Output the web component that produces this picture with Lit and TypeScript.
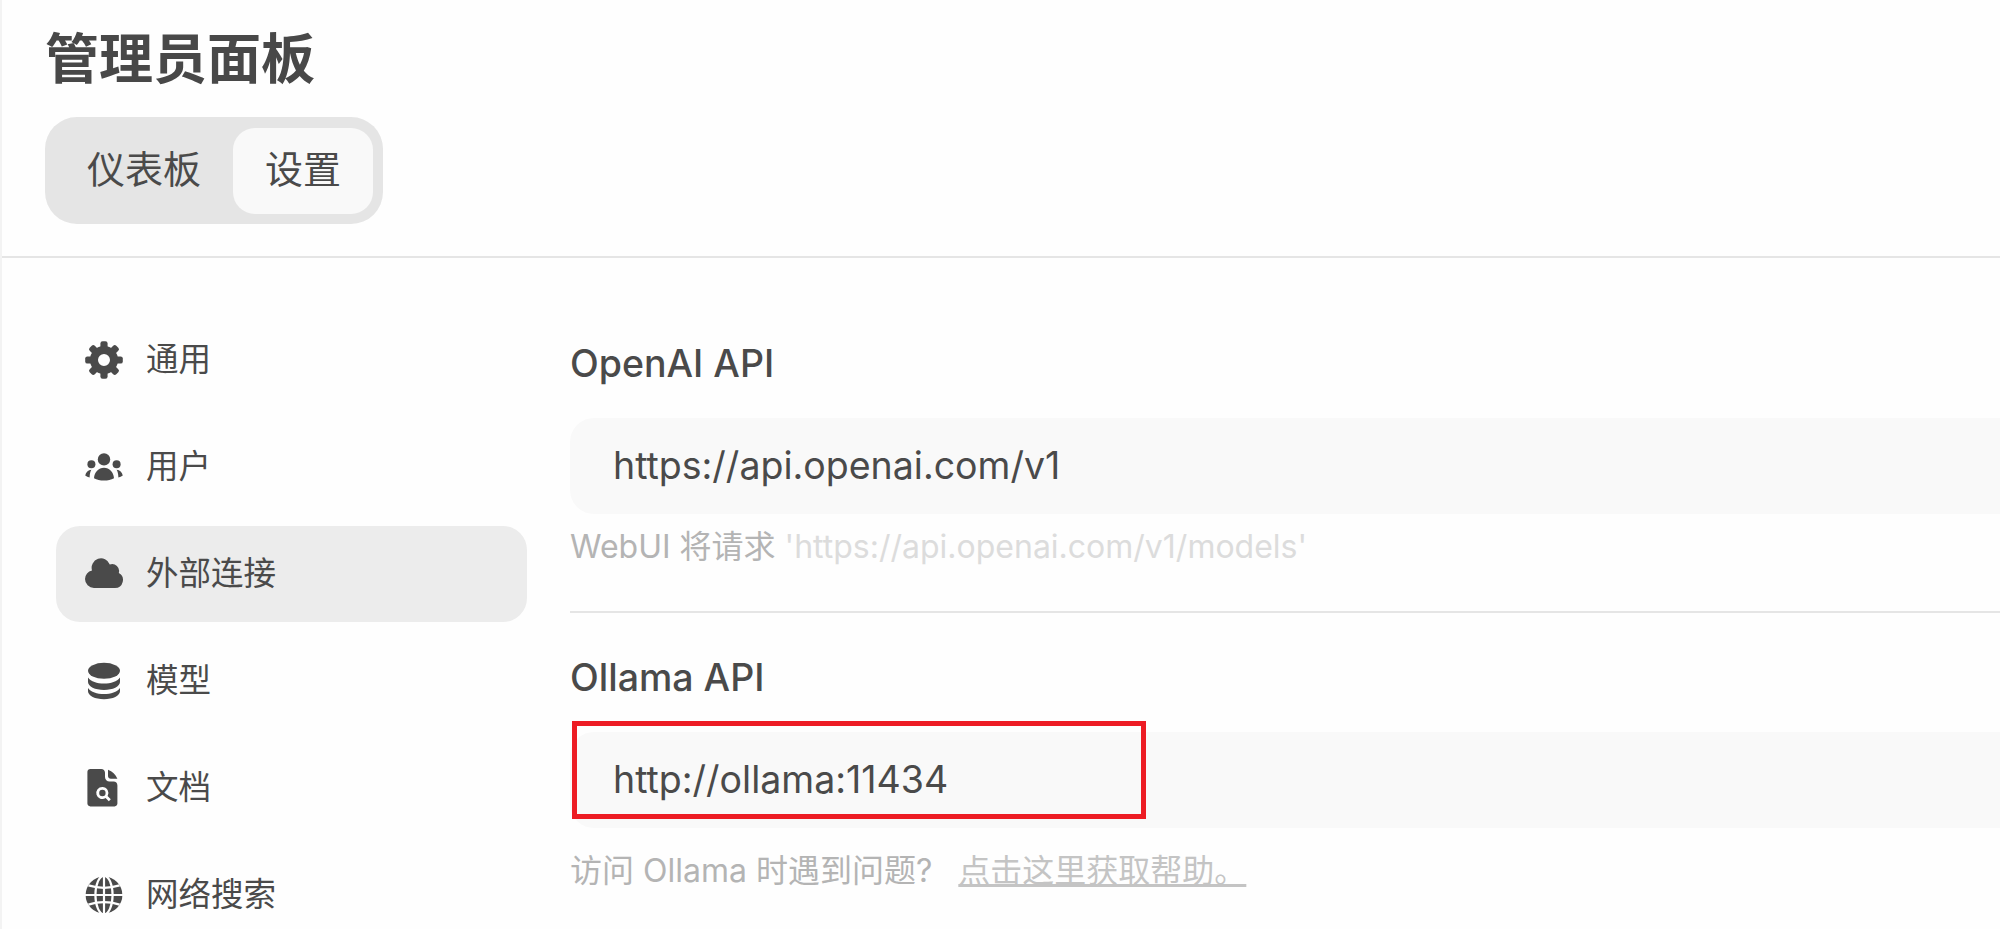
import { LitElement, html, css, svg } from 'lit';
import { customElement } from 'lit/decorators.js';

const gearTeeth = [0, 45, 90, 135, 180, 225, 270, 315].map(
  (a) => svg`<rect x="8.2" y="0.6" width="3.6" height="5" rx="1.1" transform="rotate(${a} 10 10)" />`
);

const icons = {
  gear: svg`${gearTeeth}<circle cx="10" cy="10" r="5" fill="none" stroke="currentColor" stroke-width="4" />`,
  users: svg`<circle cx="10" cy="6.2" r="3.1" /><circle cx="3.7" cy="8.6" r="2" /><circle cx="16.3" cy="8.6" r="2" />
    <path d="M5 15.6C5.2 12.6 7.3 10.4 10 10.4s4.800 2.200 5 5.200c-1.400.8-3.100 1.200-5 1.200s-3.600-.4-5-1.200Z" />
    <path d="M.6 14.300C1 12.500 2 11.500 3.700 11.400c-.5.800-.8 2-.9 3.800-.800-.1-1.500-.4-2.200-.9Z" />
    <path d="M19.400 14.300C19 12.500 18 11.500 16.300 11.400c.5.800.8 2 .9 3.800.8-.1 1.500-.4 2.200-.9Z" />`,
  cloud: svg`<path d="M.5 12.500A4.500 4.500 0 0 0 5 17h10.500a4 4 0 0 0 1.900-7.500 3.500 3.500 0 0 0-4.500-4.300A4.700 4.700 0 0 0 4 8.200 4.500 4.500 0 0 0 .5 12.500Z" />`,
  db: svg`<ellipse cx="10" cy="4.900" rx="8" ry="4" />
    <path d="M2 8.200V10.500c0 2.200 3.600 4 8 4s8-1.800 8-4V8.200c-1.500 2-4.500 3-8 3s-6.500-1-8-3Z" />
    <path d="M2 13.500V15.100c0 2.200 3.600 4 8 4s8-1.800 8-4v-1.600c-1.500 2-4.500 3-8 3s-6.500-1-8-3Z" />`,
  doc: svg`<path fill-rule="evenodd" d="M3.200.5h5.400c1.100 0 1.900.8 1.900 1.900v2.100c0 1.300 1 2.300 2.300 2.300h2c1.100 0 1.900.8 1.900 1.900v9.100c0 .8-.6 1.400-1.400 1.400H3.200c-.9 0-1.500-.6-1.500-1.400V1.900C1.700 1.100 2.300.5 3.200.5ZM9.200 9.500a3 3 0 1 0 1.600 5.500l1.600 1.600 1-1-1.600-1.600a3 3 0 0 0-2.600-4.500Zm0 1.400a1.600 1.600 0 1 1 0 3.200 1.600 1.600 0 0 1 0-3.200Z" />
    <path d="M12 .9c2.200.8 3.800 2.400 4.700 4.500h-3.300c-.8 0-1.400-.6-1.400-1.400V.9Z" />`,
  globe: svg`<circle cx="10" cy="10" r="9.200" />
    <g fill="none" stroke="#fefefe" stroke-width="1.100">
      <ellipse cx="10" cy="10" rx="4.300" ry="9.600" />
      <path d="M10 0v20" />
      <path d="M.3 10h19.400" />
      <path d="M2.200 5.200c4.800 1.500 10.800 1.500 15.600 0" />
      <path d="M2.200 14.800c4.800-1.500 10.800-1.500 15.600 0" />
    </g>`,
};

const navItems: { label: string; icon: keyof typeof icons; active?: boolean }[] = [
  { label: '通用', icon: 'gear' },
  { label: '用户', icon: 'users' },
  { label: '外部连接', icon: 'cloud', active: true },
  { label: '模型', icon: 'db' },
  { label: '文档', icon: 'doc' },
  { label: '网络搜索', icon: 'globe' },
];

@customElement('app-root')
export class AppRoot extends LitElement {
  static styles = css`
    :host {
      display: block;
      height: 929px;
      overflow: hidden;
      background: #fefefe;
      color: #4a4a4a;
      font-family: Inter, 'Noto Sans CJK SC', sans-serif;
      border-left: 2px solid #f3f3f3;
      box-sizing: border-box;
    }
    .header {
      padding: 27px 0 32px 43px;
      border-bottom: 2px solid #e5e5e5;
    }
    .title {
      font-size: 54px;
      line-height: 66px;
      font-weight: 700;
      margin: 0 0 24px;
      color: #484848;
    }
    .tabs {
      display: inline-flex;
      align-items: center;
      height: 107px;
      box-sizing: border-box;
      padding: 11px 10px 10px 10px;
      background: #e5e5e5;
      border-radius: 32px;
      font-size: 38px;
    }
    .tab {
      padding: 0 32px 3px;
      line-height: 83px;
    }
    .tab.on {
      background: #f9f9f9;
      border-radius: 22px;
    }
    .body {
      display: flex;
      padding: 54px 0 0 54px;
    }
    .nav {
      width: 471px;
      flex: none;
      display: flex;
      flex-direction: column;
      gap: 11px;
    }
    .item {
      display: flex;
      align-items: center;
      gap: 22px;
      height: 96px;
      padding-left: 28px;
      border-radius: 24px;
      font-size: 32.5px;
    }
    .item.on {
      background: #ececec;
    }
    .item span {
      margin-top: -7px;
    }
    .item svg {
      width: 40px;
      height: 40px;
      flex: none;
      fill: currentColor;
    }
    .main {
      flex: 1;
      margin-left: 43px;
      min-width: 0;
    }
    .label {
      font-size: 37.5px;
      font-weight: 450;
      line-height: 40px;
      margin: 32px 0 34px;
    }
    .field {
      position: relative;
      height: 96px;
      background: #f9f9f9;
      border-radius: 24px 0 0 24px;
      padding-left: 43px;
      font-size: 37.5px;
      line-height: 96px;
    }
    .hint {
      font-size: 32px;
      line-height: 40px;
      margin-top: 13px;
      color: #b4b4b4;
    }
    .hint.low {
      margin-top: 23px;
    }
    .hint .sample {
      color: #dcdcdc;
    }
    .hint a {
      color: #c4c4c4;
      text-decoration: underline;
      margin-left: 26px;
    }
    .sep {
      height: 2px;
      background: #e5e5e5;
      margin: 44px 0 0;
    }
    .second {
      margin-top: 45px;
    }
    .mark {
      position: absolute;
      left: 2px;
      top: -11px;
      width: 574px;
      height: 98px;
      box-sizing: border-box;
      border: 5px solid #ed1c24;
    }
  `;

  render() {
    return html`
      <div class="header">
        <h1 class="title">管理员面板</h1>
        <div class="tabs">
          <div class="tab">仪表板</div>
          <div class="tab on">设置</div>
        </div>
      </div>
      <div class="body">
        <div class="nav">
          ${navItems.map(
            (n) => html`<div class="item ${n.active ? 'on' : ''}">
              <svg viewBox="0 0 20 20">${icons[n.icon]}</svg>
              <span>${n.label}</span>
            </div>`
          )}
        </div>
        <div class="main">
          <div class="label">OpenAI API</div>
          <div class="field">https://api.openai.com/v1</div>
          <div class="hint">WebUI 将请求 <span class="sample">'https://api.openai.com/v1/models'</span></div>
          <div class="sep"></div>
          <div class="label second">Ollama API</div>
          <div class="field">http://ollama:11434<div class="mark"></div></div>
          <div class="hint low">访问 Ollama 时遇到问题?<a>点击这里获取帮助。</a></div>
        </div>
      </div>
    `;
  }
}
